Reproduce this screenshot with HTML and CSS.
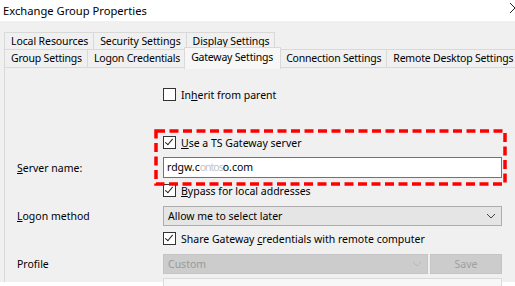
FILE: index.html
```html
<!DOCTYPE html>
<html>
<head>
    <title>Exchange Group Properties</title>
    <link rel="stylesheet" href="styles.css">
</head>
<body>
    <div class="titlebar">
        <span class="title">Exchange Group Properties</span>
        <svg class="close" width="12" height="12" viewBox="0 0 12 12"><path d="M1 1 L11 11 M11 1 L1 11" stroke="#222" stroke-width="1"/></svg>
    </div>
    <div class="dialog">
        <div class="tab-row">
            <div class="tab">Local Resources</div>
            <div class="tab">Security Settings</div>
            <div class="tab">Display Settings</div>
        </div>
        <div class="tab-row front">
            <div class="tab">Group Settings</div>
            <div class="tab">Logon Credentials</div>
            <div class="tab selected">Gateway Settings</div>
            <div class="tab">Connection Settings</div>
            <div class="tab">Remote Desktop Settings</div>
        </div>
        <div class="panel">
            <div class="row row-inherit">
                <span></span>
                <label class="check"><span class="box"></span><span>In<u>h</u>erit from parent</span></label>
            </div>
            <div class="row row-use">
                <span></span>
                <label class="check"><span class="box on"></span><span><u>U</u>se a TS Gateway server</span></label>
            </div>
            <div class="row row-server">
                <span class="label"><u>S</u>erver name:</span>
                <div class="input">rdgw.c<span class="blur">ontos</span>o.com</div>
            </div>
            <div class="row row-bypass">
                <span></span>
                <label class="check"><span class="box on"></span><span><u>B</u>ypass for local addresses</span></label>
            </div>
            <div class="row row-logon">
                <span class="label"><u>L</u>ogon method</span>
                <div class="select"><span>Allow me to select later</span><svg class="chev" width="10" height="6" viewBox="0 0 10 6"><path d="M1 1 L5 5 L9 1" fill="none" stroke="#444" stroke-width="1"/></svg></div>
            </div>
            <div class="row row-share">
                <span></span>
                <label class="check"><span class="box on"></span><span>Share Gateway <u>c</u>redentials with remote computer</span></label>
            </div>
            <div class="row row-profile">
                <span class="label">Profile</span>
                <div class="profile">
                    <div class="select disabled"><span>Custom</span><svg class="chev" width="10" height="6" viewBox="0 0 10 6"><path d="M1 1 L5 5 L9 1" fill="none" stroke="#b8b8b8" stroke-width="1"/></svg></div>
                    <div class="save">Save</div>
                </div>
            </div>
            <div class="row row-more">
                <span></span>
                <div class="more"></div>
            </div>
        </div>
        <svg class="highlight" width="353" height="57" viewBox="0 0 353 57">
            <rect x="2" y="2" width="349" height="53" fill="none" stroke="#ff0000" stroke-width="3.5" stroke-dasharray="9 4.5"/>
        </svg>
    </div>
</body>
</html>
```

FILE: styles.css
```css
body {
    margin: 0;
    width: 515px;
    height: 286px;
    overflow: hidden;
    background: #ffffff;
    font-family: "Noto Sans", "Open Sans", sans-serif;
    font-size: 10.5px;
    color: #000000;
}
.titlebar {
    height: 21px;
    display: flex;
    justify-content: space-between;
    align-items: center;
    padding-left: 3px;
    background: #ffffff;
}
.title {
    font-size: 11.2px;
}
.close {
    margin-right: -6px;
    margin-top: -6px;
}
.dialog {
    position: relative;
    background: #f0f0f0;
    height: 261px;
    padding-top: 11px;
    box-sizing: border-box;
}
.tab-row {
    display: flex;
    padding-left: 4px;
    height: 17px;
}
.tab-row.front {
    height: 18px;
    position: relative;
    z-index: 1;
}
.tab {
    padding: 0 5px 0 6px;
    border: 1px solid #d9d9d9;
    border-bottom: none;
    margin-right: -1px;
    background: #f0f0f0;
    line-height: 16px;
    letter-spacing: -0.1px;
    white-space: nowrap;
}
.front .tab {
    line-height: 17px;
    letter-spacing: -0.2px;
}
.tab.selected {
    background: #f7f7f7;
    margin-top: -2px;
    margin-left: -1px;
    margin-right: -2px;
    padding: 0 7px 0 6px;
    line-height: 19px;
    height: 21px;
    position: relative;
    z-index: 2;
}
.panel {
    margin-left: 4px;
    margin-right: -4px;
    height: 215px;
    border: 1px solid #d9d9d9;
    border-bottom: none;
    background: #f0f0f0;
    padding: 17px 0 0 12px;
    box-sizing: border-box;
}
.row {
    display: grid;
    grid-template-columns: 146px 339px;
    align-items: center;
}
.row-inherit { height: 19px; }
.row-use { height: 19px; margin-top: 29px; }
.row-server { height: 21px; margin-top: 5px; }
.row-bypass { height: 19px; margin-top: 3px; }
.row-logon { height: 20px; margin-top: 6px; }
.row-share { height: 19px; margin-top: 3px; }
.row-profile { height: 20px; margin-top: 6px; }
.row-more { height: 10px; margin-top: 4px; align-items: start; }
.check {
    display: flex;
    align-items: center;
    white-space: nowrap;
}
.box {
    width: 11px;
    height: 11px;
    border: 1px solid #333333;
    background: #ffffff;
    margin-right: 5px;
    position: relative;
}
.box.on::after {
    content: "";
    position: absolute;
    left: 3px;
    top: 0px;
    width: 3px;
    height: 7px;
    border: solid #222222;
    border-width: 0 1px 1px 0;
    transform: rotate(40deg);
}
.label {
    white-space: nowrap;
}
.input {
    height: 21px;
    box-sizing: border-box;
    border: 1px solid #4a7f9c;
    background: #ffffff;
    padding-left: 3px;
    line-height: 19px;
}
.blur {
    color: #c4c4c4;
    letter-spacing: -1px;
}
.select {
    height: 20px;
    box-sizing: border-box;
    border: 1px solid #adadad;
    background: #e5e5e5;
    padding-left: 4px;
    line-height: 18px;
    display: flex;
    justify-content: space-between;
    align-items: center;
}
.chev {
    margin-right: 5px;
}
.profile {
    display: grid;
    grid-template-columns: 265px 72px;
    gap: 2px;
}
.select.disabled {
    background: #cccccc;
    border-color: #c4c4c4;
    color: #9a9a9a;
}
.save {
    height: 20px;
    box-sizing: border-box;
    background: #cccccc;
    border: 1px solid #c4c4c4;
    color: #a0a0a0;
    text-align: center;
    line-height: 18px;
}
.more {
    height: 10px;
    border: 1px solid #dadada;
    background: #f7f7f7;
}
.highlight {
    position: absolute;
    left: 154px;
    top: 108px;
}
```
